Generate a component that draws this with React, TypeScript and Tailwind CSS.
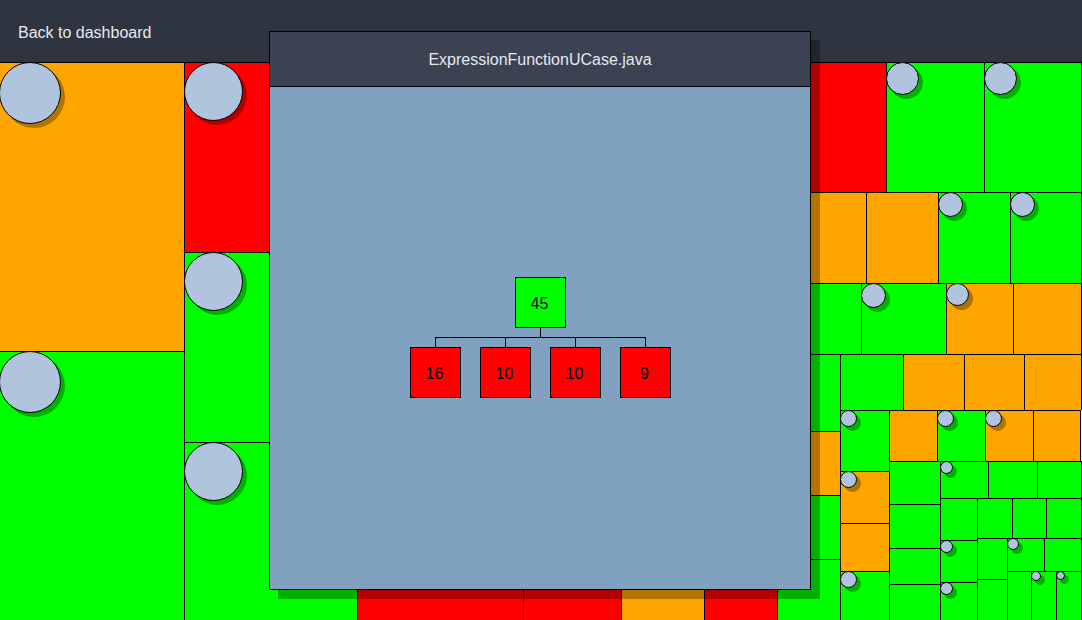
type Status = "good" | "fair" | "poor";

type Cell = { kind: "cell"; size: number; status: Status; methods?: number };
type Group = { kind: "row" | "column"; size: number; children: Area[]; inset?: boolean };
type Area = Cell | Group;

const cell = (status: Status) => (size: number, methods?: number): Cell => ({
  kind: "cell",
  size,
  status,
  methods,
});
const good = cell("good");
const fair = cell("fair");
const poor = cell("poor");
const row = (size: number, ...children: Area[]): Group => ({ kind: "row", size, children });
const column = (size: number, ...children: Area[]): Group => ({ kind: "column", size, children });

const statusClass: Record<Status, string> = {
  good: "bg-[#00ff00]",
  fair: "bg-[#ffa500]",
  poor: "bg-[#ff0000]",
};

const treemap: Group = row(
  1082,
  column(185, fair(289, 62), good(269, 62)),
  column(173, poor(190, 59), good(190, 59), good(178, 59)),
  poor(166),
  poor(98),
  fair(83),
  poor(73),
  column(
    304,
    row(130, poor(109), good(98, 33), good(97, 33)),
    row(91, fair(89), fair(72), good(72, 25), good(71, 25)),
    row(71, good(84), good(85, 25), fair(67, 23), fair(68)),
    row(
      266,
      column(63, good(77), fair(64), good(64), good(61)),
      column(
        241,
        row(56, good(63), fair(61), fair(60), fair(57)),
        row(
          210,
          column(49, good(61, 17), fair(52, 17), fair(48), good(49, 17)),
          column(
            192,
            { ...row(51, fair(48), good(48, 17), fair(48, 17), fair(47)), inset: true },
            row(
              159,
              column(51, good(43), good(44), good(36), good(36)),
              column(
                141,
                row(37, good(48, 13), good(49), good(44)),
                row(
                  122,
                  column(37, good(42), good(42, 13), good(38, 13)),
                  column(
                    104,
                    row(40, good(35), good(34), good(35)),
                    row(
                      82,
                      column(30, good(41), good(41)),
                      column(
                        74,
                        row(33, good(37, 12), good(37)),
                        row(49, good(24), good(25, 10), good(25, 9)),
                      ),
                    ),
                  ),
                ),
              ),
            ),
          ),
        ),
      ),
    ),
  ),
);

const tracks = (areas: Area[]) => areas.map((a) => `minmax(0, ${a.size}fr)`).join(" ");

function TreemapArea({ area }: { area: Area }) {
  if (area.kind === "cell") {
    return (
      <div className={`min-h-0 min-w-0 border-t border-r border-black ${statusClass[area.status]}`}>
        {area.methods && (
          <div
            className="-mt-px -ml-px rounded-full border border-black bg-[#b0c4de] shadow-[4px_4px_0_rgba(0,0,0,0.3)]"
            style={{ width: area.methods, height: area.methods }}
          />
        )}
      </div>
    );
  }
  return (
    <div
      className={`grid min-h-0 min-w-0 ${area.inset ? "pr-px" : ""}`}
      style={
        area.kind === "row"
          ? { gridTemplateColumns: tracks(area.children) }
          : { gridTemplateRows: tracks(area.children) }
      }
    >
      {area.children.map((child, i) => (
        <TreemapArea key={i} area={child} />
      ))}
    </div>
  );
}

function TreeNode({ value, status }: { value: number; status: Status }) {
  return (
    <div
      className={`flex size-[51px] items-center justify-center border border-black pt-0.5 pr-0.5 text-black ${statusClass[status]}`}
    >
      {value}
    </div>
  );
}

function MethodTree({ total, parts }: { total: number; parts: number[] }) {
  return (
    <div className="flex flex-col items-center pb-px pl-px">
      <TreeNode value={total} status="good" />
      <svg width="261" height="19" className="block" aria-hidden="true" shapeRendering="crispEdges">
        <path
          d="M130.5 0V10M25 9.5H236M25.5 9V19M95.5 9V19M165.5 9V19M235.5 9V19"
          stroke="#000"
          fill="none"
        />
      </svg>
      <div className="flex gap-[19px]">
        {parts.map((value, i) => (
          <TreeNode key={i} value={value} status="poor" />
        ))}
      </div>
    </div>
  );
}

export default function App() {
  return (
    <div className="relative flex h-screen flex-col overflow-hidden bg-white font-['Liberation_Sans',Arial,sans-serif] text-base">
      <header className="flex h-[62px] shrink-0 items-center bg-[#2e3440] px-[18px]">
        <a href="#dashboard" className="pt-1 text-[#e5e9f0]">
          Back to dashboard
        </a>
      </header>
      <main className="grid min-h-0 flex-1">
        <TreemapArea area={treemap} />
      </main>
      <section
        role="dialog"
        aria-labelledby="file-name"
        className="absolute top-[31px] right-[271px] bottom-[30px] left-[269px] flex flex-col border border-black bg-[#81a1c1] shadow-[9px_9px_0_rgba(0,0,0,0.3)]"
      >
        <h2
          id="file-name"
          className="flex h-[55px] shrink-0 items-center justify-center border-b border-black bg-[#3b4252] pt-0.5 text-[#e5e9f0]"
        >
          ExpressionFunctionUCase.java
        </h2>
        <div className="flex flex-1 items-center justify-center">
          <MethodTree total={45} parts={[16, 10, 10, 9]} />
        </div>
      </section>
    </div>
  );
}
